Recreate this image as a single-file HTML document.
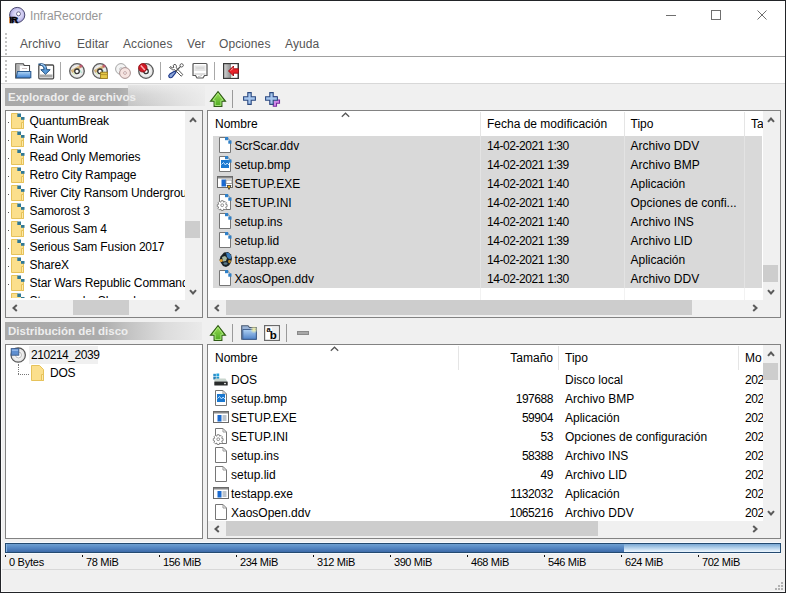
<!DOCTYPE html>
<html><head><meta charset="utf-8">
<style>
*{margin:0;padding:0;box-sizing:border-box}
html,body{width:786px;height:593px;overflow:hidden;background:#f0f0f0;font-family:"Liberation Sans",sans-serif;font-size:12px;color:#000;letter-spacing:-0.25px}
.a{position:absolute}
.t{position:absolute;white-space:nowrap;line-height:14px}
svg{position:absolute;overflow:visible}
.clip{position:absolute;overflow:hidden}
.L{letter-spacing:0}
.d{letter-spacing:-0.45px}
</style></head><body>
<div class="a" style="left:0px;top:0px;width:786px;height:83px;background:#fff"></div>
<div class="a" style="left:0px;top:56px;width:786px;height:1px;background:#a0a0a0"></div>
<div class="a" style="left:0px;top:83px;width:786px;height:1px;background:#d8d8d8"></div>
<svg style="left:8px;top:6px" width="18" height="18" viewBox="0 0 18 18"><defs><radialGradient id="gti" cx="0.55" cy="0.45" r="0.6"><stop offset="0" stop-color="#f4f2ff"/><stop offset="0.6" stop-color="#c8c4ee"/><stop offset="1" stop-color="#8e88c8"/></radialGradient></defs>
<circle cx="9.2" cy="9" r="7.6" fill="url(#gti)" stroke="#4a4870" stroke-width="1"/>
<circle cx="10.5" cy="7.8" r="2" fill="#fff" stroke="#5a5880" stroke-width="0.9"/>
<text x="1.2" y="16.8" font-family="Liberation Sans" font-weight="bold" font-size="9.5" fill="#000" stroke="#000" stroke-width="0.5" letter-spacing="-0.5">IR</text></svg>
<div class="t" style="left:30px;top:9px;color:#979797;font-size:12px;letter-spacing:-0.1px">InfraRecorder</div>
<div class="a" style="left:666px;top:15px;width:10px;height:1px;background:#6f6f6f"></div>
<div class="a" style="left:711px;top:10px;width:10px;height:10px;border:1px solid #6f6f6f"></div>
<svg style="left:757px;top:10px" width="10" height="10" viewBox="0 0 10 10"><path d="M0.5 0.5L9.5 9.5M9.5 0.5L0.5 9.5" stroke="#6f6f6f" stroke-width="1"/></svg>
<div class="a" style="left:5px;top:33px;width:2px;height:2px;background:#c4c4c4"></div>
<div class="a" style="left:5px;top:37px;width:2px;height:2px;background:#c4c4c4"></div>
<div class="a" style="left:5px;top:41px;width:2px;height:2px;background:#c4c4c4"></div>
<div class="a" style="left:5px;top:45px;width:2px;height:2px;background:#c4c4c4"></div>
<div class="a" style="left:5px;top:49px;width:2px;height:2px;background:#c4c4c4"></div>
<div class="a" style="left:5px;top:53px;width:2px;height:2px;background:#c4c4c4"></div>
<div class="a" style="left:5px;top:60px;width:2px;height:2px;background:#c4c4c4"></div>
<div class="a" style="left:5px;top:64px;width:2px;height:2px;background:#c4c4c4"></div>
<div class="a" style="left:5px;top:68px;width:2px;height:2px;background:#c4c4c4"></div>
<div class="a" style="left:5px;top:72px;width:2px;height:2px;background:#c4c4c4"></div>
<div class="a" style="left:5px;top:76px;width:2px;height:2px;background:#c4c4c4"></div>
<div class="a" style="left:5px;top:80px;width:2px;height:2px;background:#c4c4c4"></div>
<div class="t" style="left:20px;top:37px;color:#555;font-size:12px;letter-spacing:0.1px">Archivo</div>
<div class="t" style="left:77px;top:37px;color:#555;font-size:12px;letter-spacing:0.1px">Editar</div>
<div class="t" style="left:123px;top:37px;color:#555;font-size:12px;letter-spacing:0.1px">Acciones</div>
<div class="t" style="left:187px;top:37px;color:#555;font-size:12px;letter-spacing:0.1px">Ver</div>
<div class="t" style="left:219px;top:37px;color:#555;font-size:12px;letter-spacing:0.1px">Opciones</div>
<div class="t" style="left:285px;top:37px;color:#555;font-size:12px;letter-spacing:0.1px">Ayuda</div>
<div class="a" style="left:60px;top:62px;width:1px;height:18px;background:#a8a8a8"></div>
<div class="a" style="left:160px;top:62px;width:1px;height:18px;background:#a8a8a8"></div>
<div class="a" style="left:214px;top:62px;width:1px;height:18px;background:#a8a8a8"></div>
<svg width="0" height="0" style="position:absolute"><defs>
<linearGradient id="gblue" x1="0" y1="0" x2="0" y2="1"><stop offset="0" stop-color="#b4d8f6"/><stop offset="1" stop-color="#3f82d4"/></linearGradient>
<linearGradient id="gexit" x1="0" y1="0" x2="1" y2="0"><stop offset="0" stop-color="#d8d8d8"/><stop offset="0.5" stop-color="#8a8a8a"/><stop offset="1" stop-color="#3a3a3a"/></linearGradient>
<radialGradient id="gcd" cx="0.5" cy="0.5" r="0.5"><stop offset="0.3" stop-color="#fff"/><stop offset="1" stop-color="#dcdcdc"/></radialGradient>
<linearGradient id="ggreen" x1="0" y1="0" x2="0" y2="1"><stop offset="0" stop-color="#9ee05a"/><stop offset="1" stop-color="#4aa81e"/></linearGradient>
<linearGradient id="gfold" x1="0" y1="0" x2="0" y2="1"><stop offset="0" stop-color="#8fb6e8"/><stop offset="1" stop-color="#3c70b8"/></linearGradient>
</defs></svg>
<svg style="left:15px;top:63px" width="16" height="16" viewBox="0 0 16 16"><path d="M0.7 0.7h7.6l1 1.8h5.2v12.5h-13.8z" fill="#d4d4d4" stroke="#4a4a4a" stroke-width="1.1"/>
<rect x="1.5" y="2.5" width="3" height="1" fill="#8c8c8c"/><rect x="1.5" y="4.5" width="3" height="1" fill="#8c8c8c"/><rect x="1.5" y="6.5" width="3" height="1" fill="#8c8c8c"/>
<rect x="5" y="3" width="9" height="6" fill="#fff"/><path d="M7 5.5h5" stroke="#c0b0b0" stroke-width="0.8"/>
<path d="M2.5 8.5h13.3v6.2h-14.6z" fill="url(#gblue)" stroke="#2a5a90" stroke-width="1.1"/></svg>
<svg style="left:38px;top:63px" width="16" height="16" viewBox="0 0 16 16"><rect x="0.8" y="2" width="14.8" height="13.8" rx="1" fill="#fff" stroke="#4c4c4c" stroke-width="1.3"/>
<rect x="2" y="11.5" width="12.5" height="3" fill="#a8a8a8"/>
<path d="M0.5 1.2c3 -1 7 -0.5 8 3.5l0.3 2h3.4l-4.7 4.6l-4.7 -4.6h3.2l-0.2 -1.8c-0.5 -2.2 -3 -3 -5.3 -3.7z" fill="#5a9ad8" stroke="#24507e" stroke-width="1"/>
<path d="M3 1.4c2 0 3.8 1 4.2 3" stroke="#c0e0ff" stroke-width="1" fill="none"/></svg>
<svg style="left:69px;top:63px" width="16" height="16" viewBox="0 0 16 16"><circle cx="8" cy="8" r="7.3" fill="url(#gcd)" stroke="#5a5a5a" stroke-width="1.3"/><path d="M2.6 8.6L11.8 3.2" stroke="#c8a260" stroke-width="3" opacity="0.85"/><path d="M3.5 7.2L10.5 3.2" stroke="#e8d098" stroke-width="0.9"/><circle cx="12" cy="3" r="1.6" fill="#c24a6a" opacity="0.8"/><path d="M11 7l1.6 3" stroke="#b0e0d0" stroke-width="1.4"/><path d="M4 10l2 1.5" stroke="#d8f0b0" stroke-width="1.2"/><circle cx="8" cy="8.3" r="2.3" fill="#fff" stroke="#333" stroke-width="1.3"/></svg>
<svg style="left:92px;top:63px" width="16" height="16" viewBox="0 0 16 16"><circle cx="8" cy="8" r="7.3" fill="url(#gcd)" stroke="#5a5a5a" stroke-width="1.3"/><path d="M2.6 8.6L11.8 3.2" stroke="#c8a260" stroke-width="3" opacity="0.85"/><path d="M3.5 7.2L10.5 3.2" stroke="#e8d098" stroke-width="0.9"/><circle cx="12" cy="3" r="1.6" fill="#c24a6a" opacity="0.8"/><path d="M11 7l1.6 3" stroke="#b0e0d0" stroke-width="1.4"/><path d="M4 10l2 1.5" stroke="#d8f0b0" stroke-width="1.2"/><circle cx="8" cy="8.3" r="2.3" fill="#fff" stroke="#333" stroke-width="1.3"/><rect x="8.6" y="9.2" width="6.8" height="6.3" fill="#e6c846" stroke="#9a7a18" stroke-width="0.9"/><path d="M8.6 11.6h6.8" stroke="#b0902a" stroke-width="0.9"/></svg>
<svg style="left:115px;top:63px" width="16" height="16" viewBox="0 0 16 16"><g opacity="0.75"><circle cx="6" cy="6" r="5.4" fill="#f0f0f0" stroke="#888" stroke-width="1"/><circle cx="6" cy="6" r="1.3" fill="#fff" stroke="#999" stroke-width="0.8"/><circle cx="10" cy="10" r="5.4" fill="#f4dcd8" stroke="#8a6a6a" stroke-width="1"/><circle cx="10" cy="10" r="1.4" fill="#fff" stroke="#a07070" stroke-width="0.8"/></g></svg>
<svg style="left:138px;top:63px" width="16" height="16" viewBox="0 0 16 16"><circle cx="8" cy="8" r="7.3" fill="url(#gcd)" stroke="#5a5a5a" stroke-width="1.3"/><circle cx="8" cy="8.3" r="2.3" fill="#fff" stroke="#333" stroke-width="1.3"/><circle cx="4.8" cy="4.8" r="4.2" fill="#d21a26" stroke="#8a0a10" stroke-width="0.9"/><path d="M2.8 2.6l4 4.4" stroke="#ffb0b4" stroke-width="1.5"/></svg>
<svg style="left:168px;top:63px" width="16" height="16" viewBox="0 0 16 16"><path d="M1.5 4.5l1.5 -1l1.2 1.5l1.6 -0.6l-0.6 -2l1.8 -1.2c1.3 0.8 1.8 2.2 1.3 3.6l6.5 6.8l-1.6 1.6l-6.6 -6.6c-1.5 0.6 -3.2 0 -4.1 -1.6z" fill="#fff" stroke="#555" stroke-width="1"/>
<path d="M14.8 1.2a1.6 1.6 0 1 1 -2.3 2.3a1.6 1.6 0 1 1 2.3 -2.3z" fill="#fff" stroke="#555" stroke-width="1"/>
<path d="M12.6 3.4l-5.8 5.8" stroke="#555" stroke-width="1.3"/>
<path d="M6.5 8.2l1.3 1.3l-3.6 4.6c-1 1 -2.6 0.8 -3.2 -0.2c-0.5 -0.8 -0.2 -2 0.8 -2.8z" fill="#8aa4d8" stroke="#1e3a8a" stroke-width="1.2"/></svg>
<svg style="left:192px;top:63px" width="16" height="16" viewBox="0 0 16 16"><path d="M1 1.5a1 1 0 0 1 1 -1h12a1 1 0 0 1 1 1v11h-2.5l-1.5 2.5h-6l-1.5 -2.5h-2.5z" fill="#fff" stroke="#585858" stroke-width="1.2"/>
<rect x="2.5" y="2.5" width="11" height="5.5" fill="#e4e4e4"/><path d="M4 5h8" stroke="#d0d0d0"/>
<path d="M2.5 11h11" stroke="#bdbdbd" stroke-width="1"/><path d="M6 13.5c1.5 0 3 -0.5 4 -1.5" stroke="#bbb" fill="none"/></svg>
<svg style="left:223px;top:63px" width="16" height="16" viewBox="0 0 16 16"><rect x="0.6" y="0.6" width="14.8" height="14.8" fill="url(#gexit)" stroke="#3a3a3a" stroke-width="1.2"/>
<rect x="8" y="1.2" width="6.5" height="13.6" fill="#fff"/><path d="M8 10l2 4.8h-2z" fill="#cfe0d0"/>
<path d="M5.5 8l5 -5v2.8h4.9v4.4h-4.9v2.8z" fill="#e8242a" stroke="#9a0a10" stroke-width="0.9"/>
<path d="M7.5 7.5l3 -2.5" stroke="#ff9a9a" stroke-width="1"/></svg>
<div class="a" style="left:5px;top:88px;width:123px;height:18px;background:linear-gradient(90deg,#a9a9a9 0px,#ababab 112px,#b4b4b4 123px)"></div>
<div class="a" style="left:128px;top:85px;width:77px;height:21px;background:linear-gradient(90deg,rgba(240,240,240,0) 0px,rgba(240,240,240,0.3) 25px,rgba(240,240,240,0.6) 50px,rgba(240,240,240,0.9) 80px),linear-gradient(#e4e4e4,#d0d0d0 45%,#c4c4c4)"></div>
<div class="t" style="left:8px;top:90px;color:#eeeeee;font-weight:bold;font-size:11.5px;letter-spacing:0px">Explorador de archivos</div>
<div class="a" style="left:5px;top:322px;width:197px;height:18px;background:linear-gradient(90deg,#a9a9a9 0px,#acacac 95px,#c4c4c4 125px,#dcdcdc 160px,#eaeaea 197px)"></div>
<div class="t" style="left:8px;top:324px;color:#eeeeee;font-weight:bold;font-size:11.5px;letter-spacing:0px">Distribución del disco</div>
<div class="a" style="left:5px;top:110px;width:198px;height:208px;background:#fff;border:1px solid #828282"></div>
<div class="clip" style="left:6px;top:111px;width:179px;height:187px">
<div class="a" style="left:2px;top:11px;width:1px;height:1px;background:#555"></div>
<svg style="left:5px;top:2px" width="14" height="16" viewBox="0 0 14 16"><path d="M0.5 0.5h6l6 6v9h-12z" fill="#fbdf8c" stroke="#e6c25a"/><path d="M10.5 9.5h2v6h-2z" fill="#fde9a8" stroke="#e6c25a"/><rect x="6.3" y="0.5" width="3.7" height="3.5" fill="#2f7896"/><rect x="10" y="4" width="3.5" height="2.8" fill="#2f7896"/></svg>
<div class="t" style="left:23.5px;top:3px;letter-spacing:-0.1px">QuantumBreak</div>
<div class="a" style="left:2px;top:29px;width:1px;height:1px;background:#555"></div>
<svg style="left:5px;top:20px" width="14" height="16" viewBox="0 0 14 16"><path d="M0.5 0.5h6l6 6v9h-12z" fill="#fbdf8c" stroke="#e6c25a"/><path d="M10.5 9.5h2v6h-2z" fill="#fde9a8" stroke="#e6c25a"/><rect x="6.3" y="0.5" width="3.7" height="3.5" fill="#2f7896"/><rect x="10" y="4" width="3.5" height="2.8" fill="#2f7896"/></svg>
<div class="t" style="left:23.5px;top:21px;letter-spacing:-0.1px">Rain World</div>
<div class="a" style="left:2px;top:47px;width:1px;height:1px;background:#555"></div>
<svg style="left:5px;top:38px" width="14" height="16" viewBox="0 0 14 16"><path d="M0.5 0.5h6l6 6v9h-12z" fill="#fbdf8c" stroke="#e6c25a"/><path d="M10.5 9.5h2v6h-2z" fill="#fde9a8" stroke="#e6c25a"/><rect x="6.3" y="0.5" width="3.7" height="3.5" fill="#2f7896"/><rect x="10" y="4" width="3.5" height="2.8" fill="#2f7896"/></svg>
<div class="t" style="left:23.5px;top:39px;letter-spacing:-0.1px">Read Only Memories</div>
<div class="a" style="left:2px;top:65px;width:1px;height:1px;background:#555"></div>
<svg style="left:5px;top:56px" width="14" height="16" viewBox="0 0 14 16"><path d="M0.5 0.5h6l6 6v9h-12z" fill="#fbdf8c" stroke="#e6c25a"/><path d="M10.5 9.5h2v6h-2z" fill="#fde9a8" stroke="#e6c25a"/><rect x="6.3" y="0.5" width="3.7" height="3.5" fill="#2f7896"/><rect x="10" y="4" width="3.5" height="2.8" fill="#2f7896"/></svg>
<div class="t" style="left:23.5px;top:57px;letter-spacing:-0.1px">Retro City Rampage</div>
<div class="a" style="left:2px;top:83px;width:1px;height:1px;background:#555"></div>
<svg style="left:5px;top:74px" width="14" height="16" viewBox="0 0 14 16"><path d="M0.5 0.5h6l6 6v9h-12z" fill="#fbdf8c" stroke="#e6c25a"/><path d="M10.5 9.5h2v6h-2z" fill="#fde9a8" stroke="#e6c25a"/><rect x="6.3" y="0.5" width="3.7" height="3.5" fill="#2f7896"/><rect x="10" y="4" width="3.5" height="2.8" fill="#2f7896"/></svg>
<div class="t" style="left:23.5px;top:75px;letter-spacing:-0.1px">River City Ransom Underground</div>
<div class="a" style="left:2px;top:101px;width:1px;height:1px;background:#555"></div>
<svg style="left:5px;top:92px" width="14" height="16" viewBox="0 0 14 16"><path d="M0.5 0.5h6l6 6v9h-12z" fill="#fbdf8c" stroke="#e6c25a"/><path d="M10.5 9.5h2v6h-2z" fill="#fde9a8" stroke="#e6c25a"/><rect x="6.3" y="0.5" width="3.7" height="3.5" fill="#2f7896"/><rect x="10" y="4" width="3.5" height="2.8" fill="#2f7896"/></svg>
<div class="t" style="left:23.5px;top:93px;letter-spacing:-0.1px">Samorost <span class="d">3</span></div>
<div class="a" style="left:2px;top:119px;width:1px;height:1px;background:#555"></div>
<svg style="left:5px;top:110px" width="14" height="16" viewBox="0 0 14 16"><path d="M0.5 0.5h6l6 6v9h-12z" fill="#fbdf8c" stroke="#e6c25a"/><path d="M10.5 9.5h2v6h-2z" fill="#fde9a8" stroke="#e6c25a"/><rect x="6.3" y="0.5" width="3.7" height="3.5" fill="#2f7896"/><rect x="10" y="4" width="3.5" height="2.8" fill="#2f7896"/></svg>
<div class="t" style="left:23.5px;top:111px;letter-spacing:-0.1px">Serious Sam <span class="d">4</span></div>
<div class="a" style="left:2px;top:137px;width:1px;height:1px;background:#555"></div>
<svg style="left:5px;top:128px" width="14" height="16" viewBox="0 0 14 16"><path d="M0.5 0.5h6l6 6v9h-12z" fill="#fbdf8c" stroke="#e6c25a"/><path d="M10.5 9.5h2v6h-2z" fill="#fde9a8" stroke="#e6c25a"/><rect x="6.3" y="0.5" width="3.7" height="3.5" fill="#2f7896"/><rect x="10" y="4" width="3.5" height="2.8" fill="#2f7896"/></svg>
<div class="t" style="left:23.5px;top:129px;letter-spacing:-0.1px">Serious Sam Fusion <span class="d">2017</span></div>
<div class="a" style="left:2px;top:155px;width:1px;height:1px;background:#555"></div>
<svg style="left:5px;top:146px" width="14" height="16" viewBox="0 0 14 16"><path d="M0.5 0.5h6l6 6v9h-12z" fill="#fbdf8c" stroke="#e6c25a"/><path d="M10.5 9.5h2v6h-2z" fill="#fde9a8" stroke="#e6c25a"/><rect x="6.3" y="0.5" width="3.7" height="3.5" fill="#2f7896"/><rect x="10" y="4" width="3.5" height="2.8" fill="#2f7896"/></svg>
<div class="t" style="left:23.5px;top:147px;letter-spacing:-0.1px">ShareX</div>
<div class="a" style="left:2px;top:173px;width:1px;height:1px;background:#555"></div>
<svg style="left:5px;top:164px" width="14" height="16" viewBox="0 0 14 16"><path d="M0.5 0.5h6l6 6v9h-12z" fill="#fbdf8c" stroke="#e6c25a"/><path d="M10.5 9.5h2v6h-2z" fill="#fde9a8" stroke="#e6c25a"/><rect x="6.3" y="0.5" width="3.7" height="3.5" fill="#2f7896"/><rect x="10" y="4" width="3.5" height="2.8" fill="#2f7896"/></svg>
<div class="t" style="left:23.5px;top:165px;letter-spacing:-0.1px">Star Wars Republic Commando</div>
<div class="a" style="left:2px;top:191px;width:1px;height:1px;background:#555"></div>
<svg style="left:5px;top:182px" width="14" height="16" viewBox="0 0 14 16"><path d="M0.5 0.5h6l6 6v9h-12z" fill="#fbdf8c" stroke="#e6c25a"/><path d="M10.5 9.5h2v6h-2z" fill="#fde9a8" stroke="#e6c25a"/><rect x="6.3" y="0.5" width="3.7" height="3.5" fill="#2f7896"/><rect x="10" y="4" width="3.5" height="2.8" fill="#2f7896"/></svg>
<div class="t" style="left:23.5px;top:183px;letter-spacing:-0.1px">Steamworks Shared</div>
</div>
<div class="a" style="left:185px;top:111px;width:17px;height:189px;background:#f0f0f0"></div>
<div class="a" style="left:185px;top:221px;width:15px;height:17px;background:#cdcdcd"></div>
<svg style="left:186.5px;top:113.5px" width="12" height="12" viewBox="186.5 113.5 12 12"><path d="M189.5 121.3L192.5 118.0L195.5 121.3" fill="none" stroke="#5a5a5a" stroke-width="2"/></svg>
<svg style="left:186.5px;top:285.5px" width="12" height="12" viewBox="186.5 285.5 12 12"><path d="M189.5 289.7L192.5 293.0L195.5 289.7" fill="none" stroke="#5a5a5a" stroke-width="2"/></svg>
<div class="a" style="left:6px;top:300px;width:179px;height:17px;background:#f0f0f0"></div>
<div class="a" style="left:73px;top:300px;width:56px;height:15px;background:#cdcdcd"></div>
<svg style="left:8.5px;top:302px" width="12" height="12" viewBox="8.5 302 12 12"><path d="M16.3 305L13.0 308L16.3 311" fill="none" stroke="#5a5a5a" stroke-width="2"/></svg>
<svg style="left:170.5px;top:302px" width="12" height="12" viewBox="170.5 302 12 12"><path d="M174.7 305L178.0 308L174.7 311" fill="none" stroke="#5a5a5a" stroke-width="2"/></svg>
<div class="a" style="left:185px;top:300px;width:17px;height:17px;background:#f0f0f0"></div>
<div class="a" style="left:207px;top:110px;width:574px;height:208px;background:#fff;border:1px solid #828282"></div>
<div class="clip" style="left:208px;top:111px;width:555px;height:189px">
<div class="a" style="left:272px;top:1px;width:1px;height:24px;background:#e5e5e5"></div>
<div class="a" style="left:416px;top:1px;width:1px;height:24px;background:#e5e5e5"></div>
<div class="a" style="left:536px;top:1px;width:1px;height:24px;background:#e5e5e5"></div>
<div class="t" style="left:7px;top:6px;letter-spacing:0">Nombre</div>
<div class="t" style="left:279px;top:6px;letter-spacing:0">Fecha de modificación</div>
<div class="t" style="left:422.5px;top:6px;letter-spacing:0">Tipo</div>
<div class="t" style="left:543px;top:6px;letter-spacing:0">Ta</div>
<svg style="left:133px;top:1px" width="9" height="6" viewBox="0 0 9 6"><path d="M0.8 4.8L4.5 1.2L8.2 4.8" fill="none" stroke="#555" stroke-width="1.2"/></svg>
<div class="a" style="left:5px;top:25px;width:549px;height:19px;background:#d9d9d9"></div>
<div class="a" style="left:272px;top:25px;width:1px;height:19px;background:#e3e3e3"></div>
<div class="a" style="left:416px;top:25px;width:1px;height:19px;background:#e3e3e3"></div>
<div class="a" style="left:536px;top:25px;width:1px;height:19px;background:#e3e3e3"></div>
<svg style="left:9px;top:26px" width="16" height="16" viewBox="0 0 16 16"><path d="M2.5 0.5h7.5l3.5 3.5v11.5h-11z" fill="#fff" stroke="#767676"/><rect x="8" y="0" width="3.2" height="3.2" fill="#2f80c8"/><rect x="11.3" y="3.5" width="3.2" height="3.2" fill="#2f80c8"/></svg>
<div class="t" style="left:26.5px;top:28px;letter-spacing:0">ScrScar.ddv</div>
<div class="t" style="left:279px;top:28px;letter-spacing:0"><span class="d">14-02-2021</span> <span class="d">1:30</span></div>
<div class="t" style="left:422.5px;top:28px;letter-spacing:0">Archivo DDV</div>
<div class="a" style="left:5px;top:44px;width:549px;height:19px;background:#d9d9d9"></div>
<div class="a" style="left:272px;top:44px;width:1px;height:19px;background:#e3e3e3"></div>
<div class="a" style="left:416px;top:44px;width:1px;height:19px;background:#e3e3e3"></div>
<div class="a" style="left:536px;top:44px;width:1px;height:19px;background:#e3e3e3"></div>
<svg style="left:9px;top:45px" width="16" height="16" viewBox="0 0 16 16"><path d="M2.5 0.5h7.5l3.5 3.5v11.5h-11z" fill="#fff" stroke="#767676"/><rect x="4" y="4" width="8" height="8" fill="#1a78d0"/><path d="M4.5 8.5l2-2l2 2.5l1.5-2l2 2" stroke="#bfe0ff" stroke-width="1" fill="none"/><rect x="8" y="0" width="3.2" height="3.2" fill="#2f80c8"/><rect x="11.3" y="3.5" width="3.2" height="3.2" fill="#2f80c8"/></svg>
<div class="t" style="left:26.5px;top:47px;letter-spacing:0">setup.bmp</div>
<div class="t" style="left:279px;top:47px;letter-spacing:0"><span class="d">14-02-2021</span> <span class="d">1:39</span></div>
<div class="t" style="left:422.5px;top:47px;letter-spacing:0">Archivo BMP</div>
<div class="a" style="left:5px;top:63px;width:549px;height:19px;background:#d9d9d9"></div>
<div class="a" style="left:272px;top:63px;width:1px;height:19px;background:#e3e3e3"></div>
<div class="a" style="left:416px;top:63px;width:1px;height:19px;background:#e3e3e3"></div>
<div class="a" style="left:536px;top:63px;width:1px;height:19px;background:#e3e3e3"></div>
<svg style="left:9px;top:64px" width="16" height="16" viewBox="0 0 16 16"><rect x="0.5" y="1.5" width="15" height="11" fill="#fff" stroke="#6a6a6a"/><rect x="1" y="2" width="14" height="1.5" fill="#8a8a8a"/><rect x="4.5" y="4.5" width="4.5" height="7" fill="#1a6ad0"/><rect x="9" y="5" width="6" height="3.5" fill="#fff" stroke="#888" stroke-width="0.8"/><path d="M10 10.5l4 0l-2 4z" fill="#f0b020" stroke="#333" stroke-width="0.8"/></svg>
<div class="t" style="left:26.5px;top:66px;letter-spacing:0">SETUP.EXE</div>
<div class="t" style="left:279px;top:66px;letter-spacing:0"><span class="d">14-02-2021</span> <span class="d">1:40</span></div>
<div class="t" style="left:422.5px;top:66px;letter-spacing:0">Aplicación</div>
<div class="a" style="left:5px;top:82px;width:549px;height:19px;background:#d9d9d9"></div>
<div class="a" style="left:272px;top:82px;width:1px;height:19px;background:#e3e3e3"></div>
<div class="a" style="left:416px;top:82px;width:1px;height:19px;background:#e3e3e3"></div>
<div class="a" style="left:536px;top:82px;width:1px;height:19px;background:#e3e3e3"></div>
<svg style="left:9px;top:83px" width="16" height="16" viewBox="0 0 16 16"><path d="M2.5 0.5h7.5l3.5 3.5v11.5h-11z" fill="#fff" stroke="#767676"/><g transform="translate(5.2 11.2)"><path d="M-1 -4.5h2l0.4 1.5l1.4 -0.8l1.4 1.4l-0.8 1.4l1.5 0.4v2l-1.5 0.4l0.8 1.4l-1.4 1.4l-1.4 -0.8l-0.4 1.5h-2l-0.4 -1.5l-1.4 0.8l-1.4 -1.4l0.8 -1.4l-1.5 -0.4v-2l1.5 -0.4l-0.8 -1.4l1.4 -1.4l1.4 0.8z" fill="#fff" stroke="#7a7a7a" stroke-width="0.9"/><circle r="1.4" fill="#fff" stroke="#7a7a7a" stroke-width="0.8"/></g><rect x="8" y="0" width="3.2" height="3.2" fill="#2f80c8"/><rect x="11.3" y="3.5" width="3.2" height="3.2" fill="#2f80c8"/></svg>
<div class="t" style="left:26.5px;top:85px;letter-spacing:0">SETUP.INI</div>
<div class="t" style="left:279px;top:85px;letter-spacing:0"><span class="d">14-02-2021</span> <span class="d">1:40</span></div>
<div class="t" style="left:422.5px;top:85px;letter-spacing:0">Opciones de confi...</div>
<div class="a" style="left:5px;top:101px;width:549px;height:19px;background:#d9d9d9"></div>
<div class="a" style="left:272px;top:101px;width:1px;height:19px;background:#e3e3e3"></div>
<div class="a" style="left:416px;top:101px;width:1px;height:19px;background:#e3e3e3"></div>
<div class="a" style="left:536px;top:101px;width:1px;height:19px;background:#e3e3e3"></div>
<svg style="left:9px;top:102px" width="16" height="16" viewBox="0 0 16 16"><path d="M2.5 0.5h7.5l3.5 3.5v11.5h-11z" fill="#fff" stroke="#767676"/><rect x="8" y="0" width="3.2" height="3.2" fill="#2f80c8"/><rect x="11.3" y="3.5" width="3.2" height="3.2" fill="#2f80c8"/></svg>
<div class="t" style="left:26.5px;top:104px;letter-spacing:0">setup.ins</div>
<div class="t" style="left:279px;top:104px;letter-spacing:0"><span class="d">14-02-2021</span> <span class="d">1:40</span></div>
<div class="t" style="left:422.5px;top:104px;letter-spacing:0">Archivo INS</div>
<div class="a" style="left:5px;top:120px;width:549px;height:19px;background:#d9d9d9"></div>
<div class="a" style="left:272px;top:120px;width:1px;height:19px;background:#e3e3e3"></div>
<div class="a" style="left:416px;top:120px;width:1px;height:19px;background:#e3e3e3"></div>
<div class="a" style="left:536px;top:120px;width:1px;height:19px;background:#e3e3e3"></div>
<svg style="left:9px;top:121px" width="16" height="16" viewBox="0 0 16 16"><path d="M2.5 0.5h7.5l3.5 3.5v11.5h-11z" fill="#fff" stroke="#767676"/><rect x="8" y="0" width="3.2" height="3.2" fill="#2f80c8"/><rect x="11.3" y="3.5" width="3.2" height="3.2" fill="#2f80c8"/></svg>
<div class="t" style="left:26.5px;top:123px;letter-spacing:0">setup.lid</div>
<div class="t" style="left:279px;top:123px;letter-spacing:0"><span class="d">14-02-2021</span> <span class="d">1:39</span></div>
<div class="t" style="left:422.5px;top:123px;letter-spacing:0">Archivo LID</div>
<div class="a" style="left:5px;top:139px;width:549px;height:19px;background:#d9d9d9"></div>
<div class="a" style="left:272px;top:139px;width:1px;height:19px;background:#e3e3e3"></div>
<div class="a" style="left:416px;top:139px;width:1px;height:19px;background:#e3e3e3"></div>
<div class="a" style="left:536px;top:139px;width:1px;height:19px;background:#e3e3e3"></div>
<svg style="left:9px;top:140px" width="16" height="16" viewBox="0 0 16 16"><path d="M7 1.5l4-0.5l3 2.5l1 4l-1 4l-2 3l-3 1.5l-3-1l-2-3l-1.5-3l1-3.5z" fill="#1a2226"/><path d="M9 1.5l3 0.5l2 2.5l0.5 3l-2.5 0.5l-2-2z" fill="#3a7ab8"/><path d="M5 6l3-1l2 2l-1 3l-3 0.5z" fill="#a8b8a0"/><ellipse cx="4.2" cy="9.5" rx="1.6" ry="1.6" fill="#e0a030"/><ellipse cx="12.5" cy="10.5" rx="1.4" ry="1.8" fill="#b88a28"/><ellipse cx="8.5" cy="12.5" rx="2" ry="1.3" fill="#5a7a8a"/></svg>
<div class="t" style="left:26.5px;top:142px;letter-spacing:0">testapp.exe</div>
<div class="t" style="left:279px;top:142px;letter-spacing:0"><span class="d">14-02-2021</span> <span class="d">1:30</span></div>
<div class="t" style="left:422.5px;top:142px;letter-spacing:0">Aplicación</div>
<div class="a" style="left:5px;top:158px;width:549px;height:19px;background:#d9d9d9"></div>
<div class="a" style="left:272px;top:158px;width:1px;height:19px;background:#e3e3e3"></div>
<div class="a" style="left:416px;top:158px;width:1px;height:19px;background:#e3e3e3"></div>
<div class="a" style="left:536px;top:158px;width:1px;height:19px;background:#e3e3e3"></div>
<svg style="left:9px;top:159px" width="16" height="16" viewBox="0 0 16 16"><path d="M2.5 0.5h7.5l3.5 3.5v11.5h-11z" fill="#fff" stroke="#767676"/><rect x="8" y="0" width="3.2" height="3.2" fill="#2f80c8"/><rect x="11.3" y="3.5" width="3.2" height="3.2" fill="#2f80c8"/></svg>
<div class="t" style="left:26.5px;top:161px;letter-spacing:0">XaosOpen.ddv</div>
<div class="t" style="left:279px;top:161px;letter-spacing:0"><span class="d">14-02-2021</span> <span class="d">1:30</span></div>
<div class="t" style="left:422.5px;top:161px;letter-spacing:0">Archivo DDV</div>
<div class="a" style="left:272px;top:177px;width:1px;height:12px;background:#f2f2f2"></div>
<div class="a" style="left:416px;top:177px;width:1px;height:12px;background:#f2f2f2"></div>
<div class="a" style="left:536px;top:177px;width:1px;height:12px;background:#f2f2f2"></div>
</div>
<div class="a" style="left:763px;top:111px;width:17px;height:189px;background:#f0f0f0"></div>
<div class="a" style="left:763px;top:265px;width:15px;height:17px;background:#cdcdcd"></div>
<svg style="left:764.5px;top:113.5px" width="12" height="12" viewBox="764.5 113.5 12 12"><path d="M767.5 121.3L770.5 118.0L773.5 121.3" fill="none" stroke="#5a5a5a" stroke-width="2"/></svg>
<svg style="left:764.5px;top:285.5px" width="12" height="12" viewBox="764.5 285.5 12 12"><path d="M767.5 289.7L770.5 293.0L773.5 289.7" fill="none" stroke="#5a5a5a" stroke-width="2"/></svg>
<div class="a" style="left:208px;top:300px;width:555px;height:17px;background:#f0f0f0"></div>
<div class="a" style="left:226px;top:300px;width:466px;height:15px;background:#cdcdcd"></div>
<svg style="left:210.5px;top:302px" width="12" height="12" viewBox="210.5 302 12 12"><path d="M218.3 305L215.0 308L218.3 311" fill="none" stroke="#5a5a5a" stroke-width="2"/></svg>
<svg style="left:748.5px;top:302px" width="12" height="12" viewBox="748.5 302 12 12"><path d="M752.7 305L756.0 308L752.7 311" fill="none" stroke="#5a5a5a" stroke-width="2"/></svg>
<div class="a" style="left:763px;top:300px;width:17px;height:17px;background:#f0f0f0"></div>
<svg style="left:210px;top:91px" width="16" height="16" viewBox="0 0 16 16"><path d="M8 0.6L15.5 10.2h-3.6v5.3h-7.8v-5.3h-3.6z" fill="url(#ggreen)" stroke="#2e5a14" stroke-width="1.1"/><path d="M8 2.4L13 9.2h-2.1v5.3h-5.8v-5.3h-2.1z" fill="none" stroke="#b4f08a" stroke-width="0.8"/></svg>
<div class="a" style="left:232px;top:90px;width:1px;height:18px;background:#9a9a9a"></div>
<svg style="left:243px;top:92px" width="13" height="13" viewBox="0 0 13 13"><path d="M4.8 0.6h3.4v4.2h4.2v3.4h-4.2v4.2h-3.4v-4.2h-4.2v-3.4h4.2z" fill="#a6c6ee" stroke="#2c4a80" stroke-width="1.1"/></svg>
<svg style="left:265px;top:92px" width="15" height="15" viewBox="0 0 15 15"><path d="M8.3 4.6h3.2v3.4h3v3.2h-3v3h-3.2v-3h-3v-3.2h3z" fill="#d08ae8" stroke="#7a2aa0" stroke-width="1.1"/><path d="M4.8 0.6h3.4v4.2h4.2v3.4h-4.2v4.2h-3.4v-4.2h-4.2v-3.4h4.2z" fill="#a6c6ee" stroke="#2c4a80" stroke-width="1.1"/></svg>
<svg style="left:210px;top:325px" width="16" height="16" viewBox="0 0 16 16"><path d="M8 0.6L15.5 10.2h-3.6v5.3h-7.8v-5.3h-3.6z" fill="url(#ggreen)" stroke="#2e5a14" stroke-width="1.1"/><path d="M8 2.4L13 9.2h-2.1v5.3h-5.8v-5.3h-2.1z" fill="none" stroke="#b4f08a" stroke-width="0.8"/></svg>
<div class="a" style="left:232px;top:324px;width:1px;height:18px;background:#9a9a9a"></div>
<svg style="left:241px;top:325px" width="16" height="16" viewBox="0 0 16 16"><defs><linearGradient id="gf2" x1="0" y1="0" x2="0" y2="1"><stop offset="0" stop-color="#b0d2f4"/><stop offset="1" stop-color="#4f82c8"/></linearGradient><radialGradient id="gy" cx="0.5" cy="0.5" r="0.5"><stop offset="0" stop-color="#fff8a0"/><stop offset="1" stop-color="#fff8a0" stop-opacity="0"/></radialGradient></defs><path d="M0.7 14.3v-13.6h6.3l1.5 1.8h6.8v11.8z" fill="#9ab4d8" stroke="#4a5a70" stroke-width="1.1"/><path d="M1.8 4.5h13.5v9.8h-13.5z" fill="url(#gf2)" stroke="#3a5a8a" stroke-width="0.9"/><circle cx="13" cy="4.5" r="4" fill="url(#gy)"/></svg>
<svg style="left:264px;top:325px" width="16" height="16" viewBox="0 0 16 16"><rect x="0.6" y="0.6" width="14.8" height="14.8" fill="#fff" stroke="#6a6a6a" stroke-width="1.2"/><rect x="8" y="1.5" width="6.5" height="13" fill="#ececec"/><text x="2.6" y="7.2" font-family="Liberation Sans" font-weight="bold" font-size="7.5" fill="#000">a</text><text x="5.8" y="14.2" font-family="Liberation Sans" font-weight="bold" font-size="11.5" fill="#000">b</text></svg>
<div class="a" style="left:286px;top:324px;width:1px;height:18px;background:#9a9a9a"></div>
<div class="a" style="left:297px;top:331px;width:12px;height:4px;background:#a8a8a8;border:1px solid #8a8a8a"></div>
<div class="a" style="left:5px;top:344px;width:198px;height:195px;background:#fff;border:1px solid #828282"></div>
<svg style="left:10px;top:347px" width="16" height="16" viewBox="0 0 16 16"><circle cx="8.2" cy="8" r="7.2" fill="url(#gcd)" stroke="#555" stroke-width="1.2"/><path d="M5.5 8a3 3 0 1 0 3 -3" fill="none" stroke="#bbb" stroke-width="1"/><rect x="1.2" y="1.6" width="7.6" height="6.6" fill="#5f8fd0" stroke="#3a5a88" stroke-width="0.9"/><rect x="2" y="2.5" width="6" height="1.5" fill="#8fb4e6"/></svg>
<div class="a" style="left:29px;top:346px;width:69px;height:18px;background:#f0f0f0"></div>
<div class="t" style="left:31px;top:348px;letter-spacing:-0.45px"><span class="d">210214</span>_<span class="d">2039</span></div>
<div class="a" style="left:18px;top:364px;width:1px;height:10px;border-left:1px dotted #777"></div>
<div class="a" style="left:18px;top:374px;width:11px;height:1px;border-top:1px dotted #777"></div>
<svg style="left:31px;top:365px" width="14" height="16" viewBox="0 0 14 16"><path d="M0.5 0.5h8l4 4v11h-12z" fill="#fbdf8c" stroke="#e6c25a"/><path d="M10.5 9.5h2v6h-2z" fill="#fde9a8" stroke="#e6c25a"/></svg>
<div class="t" style="left:50px;top:366px;">DOS</div>
<div class="a" style="left:207px;top:344px;width:574px;height:195px;background:#fff;border:1px solid #828282"></div>
<div class="clip" style="left:208px;top:345px;width:555px;height:176px">
<div class="a" style="left:250px;top:1px;width:1px;height:24px;background:#e5e5e5"></div>
<div class="a" style="left:350px;top:1px;width:1px;height:24px;background:#e5e5e5"></div>
<div class="a" style="left:530px;top:1px;width:1px;height:24px;background:#e5e5e5"></div>
<div class="t" style="left:7px;top:6px;letter-spacing:0">Nombre</div>
<div class="t" style="left:250px;width:95px;top:6px;text-align:right;letter-spacing:0">Tamaño</div>
<div class="t" style="left:357px;top:6px;letter-spacing:0">Tipo</div>
<div class="t" style="left:537px;top:6px;letter-spacing:0">Mo</div>
<svg style="left:122px;top:1px" width="9" height="6" viewBox="0 0 9 6"><path d="M0.8 4.8L4.5 1.2L8.2 4.8" fill="none" stroke="#555" stroke-width="1.2"/></svg>
<svg style="left:5px;top:26px" width="16" height="16" viewBox="0 0 16 16"><g transform="translate(0 2.5)"><rect x="0.3" y="0.3" width="2.6" height="2.6" fill="#2a8ec8"/><rect x="3.4" y="0" width="2.8" height="2.8" fill="#22a2de"/><rect x="0.3" y="3.4" width="2.6" height="2.6" fill="#2a7eb6"/><rect x="3.4" y="3.3" width="2.8" height="2.8" fill="#2294cc"/><path d="M2.5 5h10l1.8 3h-13.5z" fill="#cad6ce"/><rect x="1.3" y="8" width="13.4" height="4" rx="0.6" fill="#2a2c2c"/><rect x="11.2" y="9.4" width="1.6" height="1.3" fill="#fff"/></g></svg>
<div class="t" style="left:23px;top:28px;letter-spacing:0">DOS</div>
<div class="t" style="left:250px;width:95px;top:28px;text-align:right;letter-spacing:0"></div>
<div class="t" style="left:357px;top:28px;letter-spacing:0">Disco local</div>
<div class="t" style="left:537px;top:28px;letter-spacing:0"><span class="d">202</span></div>
<svg style="left:5px;top:45px" width="16" height="16" viewBox="0 0 16 16"><path d="M2.5 0.5h7.5l3.5 3.5v11.5h-11z" fill="#fff" stroke="#767676"/><path d="M10 0.5v3.5h3.5" fill="none" stroke="#9a9a9a"/><rect x="4" y="4" width="8" height="8" fill="#1a78d0"/><path d="M4.5 8.5l2-2l2 2.5l1.5-2l2 2" stroke="#bfe0ff" stroke-width="1" fill="none"/></svg>
<div class="t" style="left:23px;top:47px;letter-spacing:0">setup.bmp</div>
<div class="t" style="left:250px;width:95px;top:47px;text-align:right;letter-spacing:0"><span class="d">197688</span></div>
<div class="t" style="left:357px;top:47px;letter-spacing:0">Archivo BMP</div>
<div class="t" style="left:537px;top:47px;letter-spacing:0"><span class="d">202</span></div>
<svg style="left:5px;top:64px" width="16" height="16" viewBox="0 0 16 16"><rect x="0.5" y="2.5" width="15" height="11" fill="#fff" stroke="#6a6a6a"/><rect x="1" y="3" width="14" height="1.5" fill="#8a8a8a"/><rect x="4.5" y="6" width="4" height="6.5" fill="#1a6ad0"/><path d="M9.5 7h4M9.5 9h4M9.5 11h4" stroke="#7a8898" stroke-width="1"/></svg>
<div class="t" style="left:23px;top:66px;letter-spacing:0">SETUP.EXE</div>
<div class="t" style="left:250px;width:95px;top:66px;text-align:right;letter-spacing:0"><span class="d">59904</span></div>
<div class="t" style="left:357px;top:66px;letter-spacing:0">Aplicación</div>
<div class="t" style="left:537px;top:66px;letter-spacing:0"><span class="d">202</span></div>
<svg style="left:5px;top:83px" width="16" height="16" viewBox="0 0 16 16"><path d="M2.5 0.5h7.5l3.5 3.5v11.5h-11z" fill="#fff" stroke="#767676"/><path d="M10 0.5v3.5h3.5" fill="none" stroke="#9a9a9a"/><g transform="translate(5.2 11.2)"><path d="M-1 -4.5h2l0.4 1.5l1.4 -0.8l1.4 1.4l-0.8 1.4l1.5 0.4v2l-1.5 0.4l0.8 1.4l-1.4 1.4l-1.4 -0.8l-0.4 1.5h-2l-0.4 -1.5l-1.4 0.8l-1.4 -1.4l0.8 -1.4l-1.5 -0.4v-2l1.5 -0.4l-0.8 -1.4l1.4 -1.4l1.4 0.8z" fill="#fff" stroke="#7a7a7a" stroke-width="0.9"/><circle r="1.4" fill="#fff" stroke="#7a7a7a" stroke-width="0.8"/></g></svg>
<div class="t" style="left:23px;top:85px;letter-spacing:0">SETUP.INI</div>
<div class="t" style="left:250px;width:95px;top:85px;text-align:right;letter-spacing:0"><span class="d">53</span></div>
<div class="t" style="left:357px;top:85px;letter-spacing:0">Opciones de configuración</div>
<div class="t" style="left:537px;top:85px;letter-spacing:0"><span class="d">202</span></div>
<svg style="left:5px;top:102px" width="16" height="16" viewBox="0 0 16 16"><path d="M2.5 0.5h7.5l3.5 3.5v11.5h-11z" fill="#fff" stroke="#767676"/><path d="M10 0.5v3.5h3.5" fill="none" stroke="#9a9a9a"/></svg>
<div class="t" style="left:23px;top:104px;letter-spacing:0">setup.ins</div>
<div class="t" style="left:250px;width:95px;top:104px;text-align:right;letter-spacing:0"><span class="d">58388</span></div>
<div class="t" style="left:357px;top:104px;letter-spacing:0">Archivo INS</div>
<div class="t" style="left:537px;top:104px;letter-spacing:0"><span class="d">202</span></div>
<svg style="left:5px;top:121px" width="16" height="16" viewBox="0 0 16 16"><path d="M2.5 0.5h7.5l3.5 3.5v11.5h-11z" fill="#fff" stroke="#767676"/><path d="M10 0.5v3.5h3.5" fill="none" stroke="#9a9a9a"/></svg>
<div class="t" style="left:23px;top:123px;letter-spacing:0">setup.lid</div>
<div class="t" style="left:250px;width:95px;top:123px;text-align:right;letter-spacing:0"><span class="d">49</span></div>
<div class="t" style="left:357px;top:123px;letter-spacing:0">Archivo LID</div>
<div class="t" style="left:537px;top:123px;letter-spacing:0"><span class="d">202</span></div>
<svg style="left:5px;top:140px" width="16" height="16" viewBox="0 0 16 16"><rect x="0.5" y="2.5" width="15" height="11" fill="#fff" stroke="#6a6a6a"/><rect x="1" y="3" width="14" height="1.5" fill="#8a8a8a"/><rect x="4.5" y="6" width="4" height="6.5" fill="#1a6ad0"/><path d="M9.5 7h4M9.5 9h4M9.5 11h4" stroke="#7a8898" stroke-width="1"/></svg>
<div class="t" style="left:23px;top:142px;letter-spacing:0">testapp.exe</div>
<div class="t" style="left:250px;width:95px;top:142px;text-align:right;letter-spacing:0"><span class="d">1132032</span></div>
<div class="t" style="left:357px;top:142px;letter-spacing:0">Aplicación</div>
<div class="t" style="left:537px;top:142px;letter-spacing:0"><span class="d">202</span></div>
<svg style="left:5px;top:159px" width="16" height="16" viewBox="0 0 16 16"><path d="M2.5 0.5h7.5l3.5 3.5v11.5h-11z" fill="#fff" stroke="#767676"/><path d="M10 0.5v3.5h3.5" fill="none" stroke="#9a9a9a"/></svg>
<div class="t" style="left:23px;top:161px;letter-spacing:0">XaosOpen.ddv</div>
<div class="t" style="left:250px;width:95px;top:161px;text-align:right;letter-spacing:0"><span class="d">1065216</span></div>
<div class="t" style="left:357px;top:161px;letter-spacing:0">Archivo DDV</div>
<div class="t" style="left:537px;top:161px;letter-spacing:0"><span class="d">202</span></div>
</div>
<div class="a" style="left:763px;top:345px;width:17px;height:176px;background:#f0f0f0"></div>
<div class="a" style="left:763px;top:363px;width:15px;height:17px;background:#cdcdcd"></div>
<svg style="left:764.5px;top:347.5px" width="12" height="12" viewBox="764.5 347.5 12 12"><path d="M767.5 355.3L770.5 352.0L773.5 355.3" fill="none" stroke="#5a5a5a" stroke-width="2"/></svg>
<svg style="left:764.5px;top:506.5px" width="12" height="12" viewBox="764.5 506.5 12 12"><path d="M767.5 510.7L770.5 514.0L773.5 510.7" fill="none" stroke="#5a5a5a" stroke-width="2"/></svg>
<div class="a" style="left:208px;top:521px;width:555px;height:17px;background:#f0f0f0"></div>
<div class="a" style="left:226px;top:521px;width:372px;height:15px;background:#cdcdcd"></div>
<svg style="left:210.5px;top:523px" width="12" height="12" viewBox="210.5 523 12 12"><path d="M218.3 526L215.0 529L218.3 532" fill="none" stroke="#5a5a5a" stroke-width="2"/></svg>
<svg style="left:748.5px;top:523px" width="12" height="12" viewBox="748.5 523 12 12"><path d="M752.7 526L756.0 529L752.7 532" fill="none" stroke="#5a5a5a" stroke-width="2"/></svg>
<div class="a" style="left:763px;top:521px;width:17px;height:17px;background:#f0f0f0"></div>
<div class="a" style="left:5px;top:542px;width:776px;height:12px;background:#f6fafe"></div>
<div class="a" style="left:5px;top:543px;width:776px;height:10px;background:linear-gradient(#78a6d2 0px,#a6c8e6 3px,#d4e6f6 6px,#eef6fd 8px);border:1px solid #244a70"></div>
<div class="a" style="left:6px;top:544px;width:618px;height:8px;background:linear-gradient(#6e9fd0,#5486c2 50%,#3d6aa8)"></div>
<div class="a" style="left:6px;top:544px;width:1px;height:8px;background:#86b2e0"></div>
<div class="a" style="left:5px;top:555px;width:1px;height:2px;background:#111"></div>
<div class="a" style="left:82px;top:555px;width:1px;height:2px;background:#111"></div>
<div class="a" style="left:159px;top:555px;width:1px;height:2px;background:#111"></div>
<div class="a" style="left:236px;top:555px;width:1px;height:2px;background:#111"></div>
<div class="a" style="left:313px;top:555px;width:1px;height:2px;background:#111"></div>
<div class="a" style="left:390px;top:555px;width:1px;height:2px;background:#111"></div>
<div class="a" style="left:467px;top:555px;width:1px;height:2px;background:#111"></div>
<div class="a" style="left:544px;top:555px;width:1px;height:2px;background:#111"></div>
<div class="a" style="left:621px;top:555px;width:1px;height:2px;background:#111"></div>
<div class="a" style="left:698px;top:555px;width:1px;height:2px;background:#111"></div>
<div class="t" style="left:9px;top:555px;font-size:11px;letter-spacing:-0.2px"><span class="d">0</span> Bytes</div>
<div class="t" style="left:86px;top:555px;font-size:11px;letter-spacing:-0.2px"><span class="d">78</span> MiB</div>
<div class="t" style="left:163px;top:555px;font-size:11px;letter-spacing:-0.2px"><span class="d">156</span> MiB</div>
<div class="t" style="left:240px;top:555px;font-size:11px;letter-spacing:-0.2px"><span class="d">234</span> MiB</div>
<div class="t" style="left:317px;top:555px;font-size:11px;letter-spacing:-0.2px"><span class="d">312</span> MiB</div>
<div class="t" style="left:394px;top:555px;font-size:11px;letter-spacing:-0.2px"><span class="d">390</span> MiB</div>
<div class="t" style="left:471px;top:555px;font-size:11px;letter-spacing:-0.2px"><span class="d">468</span> MiB</div>
<div class="t" style="left:548px;top:555px;font-size:11px;letter-spacing:-0.2px"><span class="d">546</span> MiB</div>
<div class="t" style="left:625px;top:555px;font-size:11px;letter-spacing:-0.2px"><span class="d">624</span> MiB</div>
<div class="t" style="left:702px;top:555px;font-size:11px;letter-spacing:-0.2px"><span class="d">702</span> MiB</div>
<div class="a" style="left:1px;top:569px;width:784px;height:1px;background:#d8d8d8"></div>
<div class="a" style="left:781px;top:582px;width:2px;height:2px;background:#b2b2b2"></div>
<div class="a" style="left:778px;top:585px;width:2px;height:2px;background:#b2b2b2"></div>
<div class="a" style="left:781px;top:585px;width:2px;height:2px;background:#b2b2b2"></div>
<div class="a" style="left:775px;top:588px;width:2px;height:2px;background:#b2b2b2"></div>
<div class="a" style="left:778px;top:588px;width:2px;height:2px;background:#b2b2b2"></div>
<div class="a" style="left:781px;top:588px;width:2px;height:2px;background:#b2b2b2"></div>
<div class="a" style="left:1px;top:591px;width:784px;height:1px;background:#fafafa"></div>
<div class="a" style="left:1px;top:84px;width:1px;height:507px;background:#fafafa"></div>
<div class="a" style="left:0px;top:0px;width:786px;height:593px;border:1px solid #222428"></div>
</body></html>
